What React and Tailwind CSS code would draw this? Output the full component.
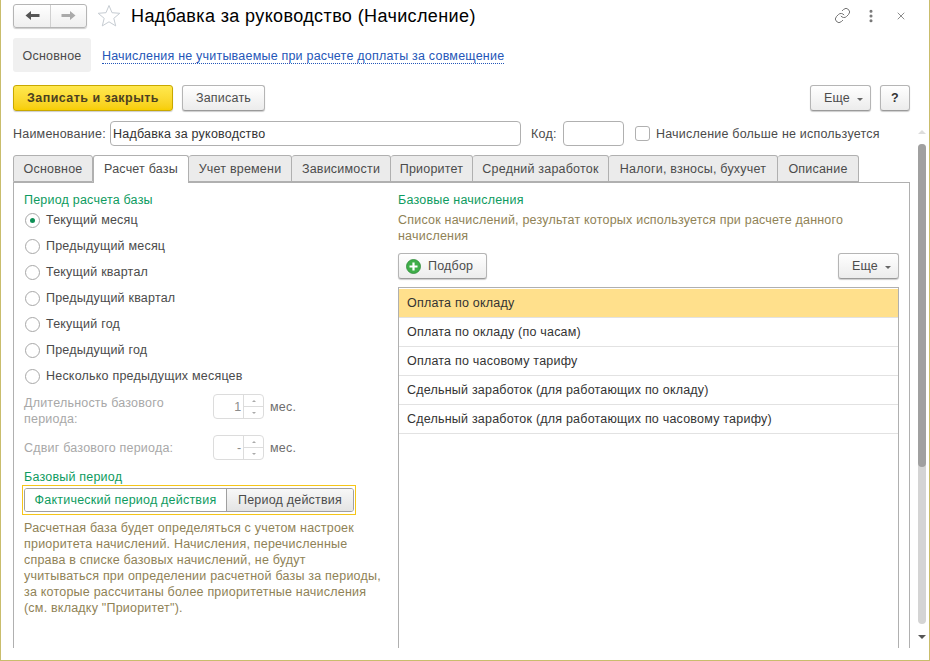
import { MoreVertical, X, Link } from 'lucide-react';

const font = { fontFamily: '"Liberation Sans", Arial, sans-serif' };

const tabs = [
  ['Основное', 'w-[80px]'],
  ['Расчет базы', 'w-[96px]'],
  ['Учет времени', 'w-[103px]'],
  ['Зависимости', 'w-[99px]'],
  ['Приоритет', 'w-[82px]'],
  ['Средний заработок', 'w-[136px]'],
  ['Налоги, взносы, бухучет', 'w-[169px]'],
  ['Описание', 'w-[81px]'],
];

const periods = [
  'Текущий месяц',
  'Предыдущий месяц',
  'Текущий квартал',
  'Предыдущий квартал',
  'Текущий год',
  'Предыдущий год',
  'Несколько предыдущих месяцев',
];

const accruals = [
  'Оплата по окладу',
  'Оплата по окладу (по часам)',
  'Оплата по часовому тарифу',
  'Сдельный заработок (для работающих по окладу)',
  'Сдельный заработок (для работающих по часовому тарифу)',
];

const btn =
  'flex h-[26px] items-center justify-center rounded-[3px] border border-[#b5b5b5] border-b-[#9a9a9a] bg-gradient-to-b from-white to-[#ececec] text-[#4d4d4d] shadow-[0_1px_1px_rgba(0,0,0,0.2)]';

function Caret() {
  return <span className="ml-[7px] mt-[2px] h-0 w-0 border-x-[3px] border-t-[3px] border-x-transparent border-t-[#666]" />;
}

function Spinner({ value }) {
  return (
    <div className="flex h-[25px] w-[51px] rounded-[4px] border border-[#dcdcdc]">
      <div className="flex w-[30px] items-center justify-end pr-[2px] text-[#8c8c8c]">{value}</div>
      <div className="flex w-[20px] flex-col border-l border-[#dcdcdc]">
        <div className="flex h-[12px] items-center justify-center border-b border-[#dcdcdc]">
          <span className="h-0 w-0 border-x-[2px] border-b-[2px] border-x-transparent border-b-[#aaa]" />
        </div>
        <div className="flex flex-1 items-center justify-center">
          <span className="h-0 w-0 border-x-[2px] border-t-[2px] border-x-transparent border-t-[#aaa]" />
        </div>
      </div>
    </div>
  );
}

export default function App() {
  return (
    <div
      style={font}
      className="flex h-[661px] w-[930px] flex-col overflow-hidden border-x border-b border-[#c9bd6c] bg-white text-[12.5px] leading-4 tracking-[0.21px] text-[#4b4b4b]"
    >
      {/* title row */}
      <div className="flex h-[30px] items-center pl-[12px] pt-[1px]">
        <div className="flex h-[24px] w-[74px] rounded-[3px] border border-[#b5b5b5] bg-gradient-to-b from-white to-[#efefef] shadow-[0_1px_1px_rgba(0,0,0,0.2)]">
          <div className="flex w-[37px] items-center justify-center border-r border-[#d0d0d0]">
            <svg width="15" height="11" viewBox="0 0 15 11">
              <path d="M0.5 5.5 L6 1 V4 H14.5 V7 H6 V10 Z" fill="#555" />
            </svg>
          </div>
          <div className="flex flex-1 items-center justify-center">
            <svg width="15" height="11" viewBox="0 0 15 11">
              <path d="M14.5 5.5 L9 1 V4 H0.5 V7 H9 V10 Z" fill="#aaa" />
            </svg>
          </div>
        </div>
        <svg className="ml-[10px]" width="24" height="23" viewBox="0 0 24 23">
          <path d="M12 1.5 L15 8.7 L22.8 9.3 L16.8 14.3 L18.7 21.9 L12 17.8 L5.3 21.9 L7.2 14.3 L1.2 9.3 L9 8.7 Z" fill="#fff" stroke="#c6ccd2" strokeWidth="1" />
        </svg>
        <h1 className="ml-[10px] text-[18px] font-normal leading-6 tracking-[0.38px] text-black">Надбавка за руководство (Начисление)</h1>
        <div className="ml-auto flex items-center pr-[22px] text-[#666]">
          <Link size={17} strokeWidth={1.3} />
          <MoreVertical size={16} strokeWidth={2.6} className="ml-[12px] text-[#777]" />
          <X size={12} strokeWidth={1.5} className="ml-[16px]" />
        </div>
      </div>

      {/* form sections */}
      <div className="mt-[8px] flex h-[34px] items-center pl-[12px]">
        <div className="flex h-[34px] w-[78px] items-center justify-center rounded-[3px] bg-[#f0f0f0] pt-[1px]">Основное</div>
        <a className="ml-[11px] mt-[2px] border-b border-dotted border-[#2456b8] leading-[14px] text-[#2456b8]">
          Начисления не учитываемые при расчете доплаты за совмещение
        </a>
      </div>

      {/* command bar */}
      <div className="mt-[13px] flex pl-[12px] pr-[19px]">
        <button className="flex h-[26px] w-[160px] items-center justify-center rounded-[3px] border border-[#c8a800] bg-gradient-to-b from-[#ffe84d] to-[#f7ce00] font-bold tracking-[0.45px] text-[#4b4020] shadow-[0_1px_1px_rgba(0,0,0,0.2)]">
          Записать и закрыть
        </button>
        <button className={`${btn} ml-[9px] w-[83px]`}>Записать</button>
        <button className={`${btn} ml-auto w-[61px] pl-[6px]`}>
          Еще
          <Caret />
        </button>
        <button className={`${btn} ml-[9px] w-[30px] font-bold text-[#333]`}>?</button>
      </div>

      {/* content with the scrollbar beside it */}
      <div className="mt-[10px] flex min-h-0 flex-1">
        <div className="flex w-[909px] shrink-0 flex-col pl-[12px]">
          <div className="flex h-[25px] items-center">
            <span className="w-[97px]">Наименование:</span>
            <div className="flex h-[25px] w-[411px] items-center rounded-[4px] border border-[#b0b0b0] pl-[2px] text-[#333]">
              Надбавка за руководство
            </div>
            <span className="ml-[10px] w-[32px]">Код:</span>
            <div className="h-[25px] w-[61px] rounded-[4px] border border-[#b0b0b0]" />
            <span className="ml-[11px] h-[15px] w-[15px] rounded-[3px] border border-[#b0b0b0]" />
            <span className="ml-[6px]">Начисление больше не используется</span>
          </div>

          <div className="mt-[9px] flex h-[27px] items-stretch">
            {tabs.map(([label, width], i) =>
              i === 1 ? (
                <div key={label} className={`${width} relative z-10 -mb-px flex items-center justify-center rounded-t-[3px] border-x border-t border-[#b0b0b0] bg-white pb-[1px]`}>
                  {label}
                </div>
              ) : (
                <div key={label} className={`${width} flex items-center justify-center rounded-t-[3px] border-t border-r border-b border-[#b0b0b0] bg-[#ebebeb] ${i === 0 ? 'border-l' : ''}`}>
                  {label}
                </div>
              ),
            )}
          </div>

          {/* tab panel */}
          <div className="flex h-[466px] w-[897px] border-x border-t border-[#b0b0b0]">
            <div className="w-[384px] pl-[10px] pt-[9px]">
              <div className="text-[#0e9b60]">Период расчета базы</div>
              <div className="-mt-[1px] flex flex-col">
                {periods.map((label, i) => (
                  <div key={label} className="flex h-[26px] items-center">
                    <span className="ml-[1px] flex h-[15px] w-[15px] items-center justify-center rounded-full border border-[#a8a8a8]">
                      {i === 0 && <span className="h-[5px] w-[5px] rounded-full bg-[#0e8f56]" />}
                    </span>
                    <span className="ml-[6px]">{label}</span>
                  </div>
                ))}
              </div>

              <div className="mt-[5px] flex h-[25px] text-[#a8a8a8]">
                <div className="mt-[1px] w-[189px]">
                  Длительность базового
                  <br />
                  периода:
                </div>
                <Spinner value="1" />
                <span className="ml-[6px] self-center text-[#6e6e6e]">мес.</span>
              </div>
              <div className="mt-[16px] flex h-[25px] items-center text-[#a8a8a8]">
                <div className="w-[189px]">Сдвиг базового периода:</div>
                <Spinner value="-" />
                <span className="ml-[6px] text-[#6e6e6e]">мес.</span>
              </div>

              <div className="mt-[9px] text-[#0e9b60]">Базовый период</div>
              <div className="-ml-[2px] h-[30px] w-[334px] border border-[#f5c518] px-[1px] py-[2px]">
                <div className="flex h-[24px] overflow-hidden rounded-[3px] border border-[#a0a0a0]">
                  <div className="flex w-[201px] items-center justify-center bg-white text-[#0e9b60]">Фактический период действия</div>
                  <div className="flex flex-1 items-center justify-center border-l border-[#a0a0a0] bg-gradient-to-b from-[#f8f8f8] to-[#e4e4e4] text-[#4b4b4b]">
                    Период действия
                  </div>
                </div>
              </div>
              <p className="mt-[5px] w-[359px] text-[#8f8256]">
                Расчетная база будет определяться с учетом настроек приоритета начислений. Начисления, перечисленные
                справа в списке базовых начислений, не будут учитываться при определении расчетной базы за периоды,
                за которые рассчитаны более приоритетные начисления (см. вкладку "Приоритет").
              </p>
            </div>

            <div className="flex w-[501px] flex-col pt-[9px]">
              <div className="text-[#0e9b60]">Базовые начисления</div>
              <p className="mt-[4px] text-[#8f8256]">
                Список начислений, результат которых используется при расчете данного начисления
              </p>
              <div className="mt-[9px] flex justify-between">
                <button className={`${btn} w-[89px] !justify-start pl-[7px]`}>
                  <svg className="mr-[7px]" width="15" height="15" viewBox="0 0 15 15">
                    <circle cx="7.5" cy="7.5" r="7" fill="#3fae49" stroke="#2d8a38" strokeWidth="0.8" />
                    <path d="M7.5 3.5 V11.5 M3.5 7.5 H11.5" stroke="#fff" strokeWidth="2.2" />
                  </svg>
                  Подбор
                </button>
                <button className={`${btn} w-[61px] pl-[6px]`}>
                  Еще
                  <Caret />
                </button>
              </div>
              <div className="mt-[8px] flex-1 border-x border-t border-[#b0b0b0] pt-[1px] text-[#333]">
                {accruals.map((label, i) => (
                  <div
                    key={label}
                    className={`flex h-[29px] items-center border-b border-[#e2e2e2] pl-[8px] ${i === 0 ? 'bg-[#ffe08c]' : ''}`}
                  >
                    {label}
                  </div>
                ))}
              </div>
            </div>
          </div>
        </div>

        {/* page scrollbar */}
        <div className="flex w-[19px] shrink-0 flex-col items-center pl-[5px] pt-[9px]">
          <span className="h-0 w-0 border-x-[4px] border-b-[4px] border-x-transparent border-b-[#ddd]" />
          <div className="mt-[10px] flex h-[480px] w-[8px] flex-col overflow-hidden rounded-[4px] bg-[#d4d4d4]">
            <div className="h-[323px] rounded-b-[4px] bg-[#a0a0a0]" />
          </div>
          <span className="mt-[11px] h-0 w-0 border-x-[4px] border-t-[4px] border-x-transparent border-t-[#555]" />
        </div>
      </div>
    </div>
  );
}
